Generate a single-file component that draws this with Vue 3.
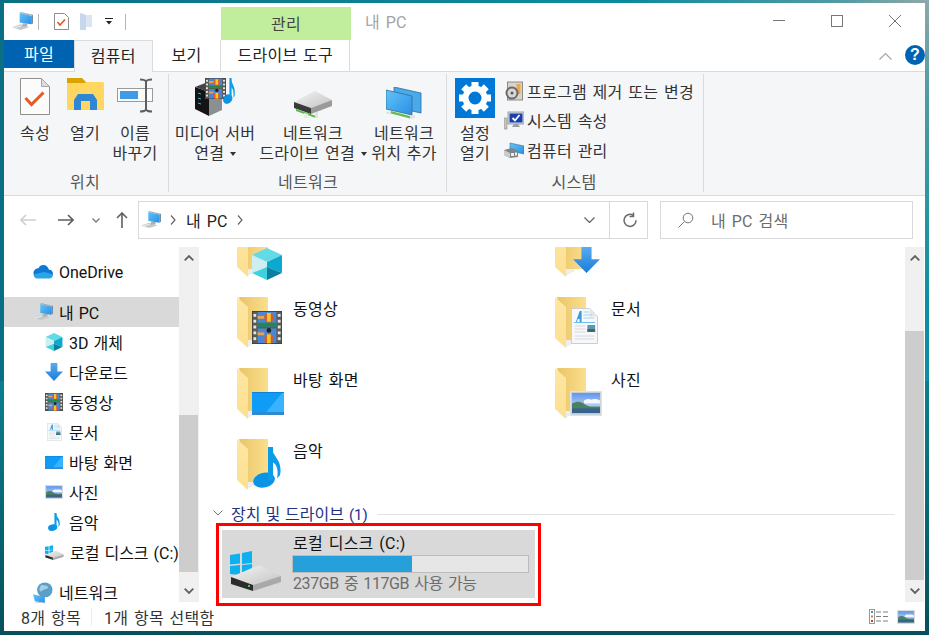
<template>
  <div class="desk">
    <svg class="defs" width="0" height="0" aria-hidden="true">
      <defs>
        <linearGradient id="gBack" x1="0" y1="0" x2="1" y2="0"><stop offset="0" stop-color="#e9c468" /><stop offset="1" stop-color="#fbdf8d" /></linearGradient>
        <linearGradient id="gDoor" x1="0" y1="0" x2="0" y2="1"><stop offset="0" stop-color="#fee6a3" /><stop offset="1" stop-color="#fcdf90" /></linearGradient>
        <linearGradient id="gArrow" x1="0" y1="0" x2="0" y2="1"><stop offset="0" stop-color="#58acf0" /><stop offset="1" stop-color="#1c7cd6" /></linearGradient>
        <linearGradient id="gScreen" x1="0" y1="0" x2="1" y2="1"><stop offset="0" stop-color="#62c4f8" /><stop offset="1" stop-color="#2a8fe6" /></linearGradient>
        <linearGradient id="gSky" x1="0" y1="0" x2="0" y2="1"><stop offset="0" stop-color="#5f96ea" /><stop offset="1" stop-color="#dfeaf6" /></linearGradient>
        <linearGradient id="gTop" x1="0" y1="0" x2="1" y2="1"><stop offset="0" stop-color="#f4f4f4" /><stop offset="1" stop-color="#c4c4c4" /></linearGradient>

        <symbol id="i-pc" viewBox="0 0 22 20" preserveAspectRatio="none">
          <path d="M0 16l9-3 9 3-9 3z" fill="#c3c8cb" />
          <path d="M1 16.500l8-2.500 1 1-8 2.500z" fill="#e8eaeb" />
          <path d="M11 12h5v3h-5z" fill="#aab0b5" />
          <path d="M8 1l12 3v9l-12-2z" fill="url(#gScreen)" />
          <path d="M8 1l1-1 13 3-2 1z" fill="#9ab2c2" />
          <path d="M20 4l2-1v9l-2 1z" fill="#6f8ea3" />
        </symbol>

        <symbol id="i-folder" viewBox="0 0 48 51" preserveAspectRatio="none">
          <path d="M2 0h29v43h-20z" fill="url(#gBack)" />
          <path d="M0 0l11 10v41l-11-10z" fill="url(#gDoor)" />
          <path d="M11 43h9v2l-9 5z" fill="#eeeeee" />
        </symbol>

        <symbol id="i-cube" viewBox="0 0 32 32" preserveAspectRatio="none">
          <path d="M16 0l15 7-15 7-15-7z" fill="#63dbe6" />
          <path d="M1 7l15 7v5l-15 6z" fill="#cdeff3" />
          <path d="M31 7l-15 7v5l15 6z" fill="#0aa9cd" />
          <path d="M1 25l15-6v13z" fill="#3fd1de" />
          <path d="M31 25l-15-6v13z" fill="#0a7f9f" />
        </symbol>

        <symbol id="i-arrow" viewBox="0 0 32 32" preserveAspectRatio="none">
          <path d="M10 0h12v15h10l-16 17-16-17h10z" fill="url(#gArrow)" />
        </symbol>

        <symbol id="i-film" viewBox="0 0 32 34" preserveAspectRatio="none">
          <rect width="32" height="34" fill="#5b5b55" />
          <rect y="0" width="32" height="34" fill="none" stroke="#2f2f2f" />
          <g fill="#e6e6e0">
            <rect x="1.500" y="3" width="3" height="3" /><rect x="1.500" y="9" width="3" height="3" /><rect x="1.500" y="15" width="3" height="3" /><rect x="1.500" y="21" width="3" height="3" /><rect x="1.500" y="27" width="3" height="3" />
            <rect x="27.500" y="3" width="3" height="3" /><rect x="27.500" y="9" width="3" height="3" /><rect x="27.500" y="15" width="3" height="3" /><rect x="27.500" y="21" width="3" height="3" /><rect x="27.500" y="27" width="3" height="3" />
          </g>
          <rect x="6" y="1" width="20" height="15" fill="#4a86d8" />
          <rect x="6" y="18" width="20" height="15" fill="#4a86d8" />
          <rect x="6" y="12" width="20" height="4" fill="#1f8a4c" />
          <circle cx="18" cy="7" r="5" fill="#e05a20" />
          <rect x="16" y="2" width="4" height="9" fill="#f1c62f" />
          <circle cx="18" cy="29" r="5" fill="#e05a20" />
          <rect x="16" y="24" width="4" height="9" fill="#f1c62f" />
          <rect x="6" y="5" width="7" height="3" fill="#e9a24a" />
          <rect x="6" y="22" width="7" height="3" fill="#e9a24a" />
          <circle cx="18" cy="20" r="2.500" fill="#222" />
        </symbol>

        <symbol id="i-doc" viewBox="0 0 28 36" preserveAspectRatio="none">
          <path d="M.5.5h19l8 8v27h-27z" fill="#f7f8f9" stroke="#c9cdd0" />
          <path d="M19.500.5v8h8z" fill="#e4e6e8" />
          <path d="M5 14l4-11h2v11h-2v-3h-2l-1 3z" fill="#3c9ad8" />
          <path d="M13 4h6M13 7h9M13 10h11" stroke="#a6d4f2" />
          <path d="M3 14.500h22" stroke="#67bdf0" />
          <path d="M4 18h11M4 21h11M4 24h11M4 28h20M4 31h20" stroke="#d4d8db" />
          <rect x="17" y="17" width="8" height="7" fill="#5e94b4" />
          <rect x="17" y="21" width="8" height="3" fill="#3e6d5e" />
        </symbol>

        <symbol id="i-photo" viewBox="0 0 32 26" preserveAspectRatio="none">
          <rect width="32" height="26" fill="#dfe3e6" />
          <rect x="1" y="1" width="30" height="24" fill="#cdd3d8" />
          <rect x="2" y="2" width="28" height="21" fill="url(#gSky)" />
          <path d="M14 10c3-2 5-2 7-1 3-1 6-1 9 1v3h-16z" fill="#f4f7fb" />
          <path d="M2 13c6-3 9-2 13 1s9 2 15 2v7h-28z" fill="#4d7f63" />
          <rect x="2" y="18" width="28" height="5" fill="#37648c" />
        </symbol>

        <symbol id="i-desktop" viewBox="0 0 32 23" preserveAspectRatio="none">
          <rect width="32" height="23" fill="#0f9cf6" />
          <path d="M12 23l18-22h2v22z" fill="#38b3ff" />
          <rect width="32" height="1" fill="#0a83d4" />
          <rect y="20" width="32" height="3" fill="#2f8ad0" />
        </symbol>

        <symbol id="i-note" viewBox="0 0 28 42" preserveAspectRatio="none">
          <ellipse cx="11" cy="34" rx="11" ry="7.500" transform="rotate(-14 11 34)" fill="#0b94e6" />
          <rect x="15" y="0" width="5" height="34" fill="#0b9cea" />
          <path d="M19 1c1 10 11 12 8 28l-3 3c2-10-1-15-5-17z" fill="#0b9cea" />
        </symbol>

        <symbol id="i-drive" viewBox="0 0 52 41" preserveAspectRatio="none">
          <path d="M0 5l10-1.500v10l-10 1zM12 3l10-2v12l-10 1zM0 16l10-1v10l-10-1zM12 15l10-1v11l-10-1z" fill="#0fb0f0" />
          <path d="M1 27l28-12 22 11-28 9z" fill="url(#gTop)" />
          <path d="M1 27l22 8v6l-22-7z" fill="#2c2c2c" />
          <path d="M23 35l28-9v6l-28 9z" fill="#a9a9a9" />
          <rect x="18" y="35" width="2" height="2" fill="#30d050" />
        </symbol>

        <symbol id="i-net" viewBox="0 0 22 24" preserveAspectRatio="none">
          <circle cx="13" cy="9" r="8.500" fill="#5b9fc8" />
          <path d="M9 3c3 1 6 0 8 3-2 3-5 2-7 4s-3 0-3-2z" fill="#a3cfe5" />
          <path d="M0 14l13 3v7l-11-2z" fill="url(#gScreen)" />
          <path d="M3 22l10 2-2 1-9-2z" fill="#c5cace" />
        </symbol>

        <symbol id="i-onedrive" viewBox="0 0 20 13" preserveAspectRatio="none">
          <path d="M4 12h12c3 0 4-2 4-4s-2-4-4-3.500c-1-3-3-4.500-5.500-4.500s-4 1-5 3c-3 0-5 2-5 4.500s1 4.500 3.500 4.500z" fill="#0f78d4" />
          <path d="M4 12.500h12.500c2 0 3.500-2 3.500-4l-9-2-10 2c0 2 1 4 3 4z" fill="#2aa6e8" />
        </symbol>
      </defs>
    </svg>

    <div class="window">
      <div class="titlebar">
        <div class="qat">
          <svg class="q-pc"><use href="#i-pc" /></svg>
          <span class="q-sep"></span>
          <svg class="q-doc" viewBox="0 0 15 17">
            <path d="M.5.500h10l4 4v12h-14z" fill="#fff" stroke="#8d8d8d" />
            <path d="M3.500 9l2.500 3 5-5.500" fill="none" stroke="#e8541e" stroke-width="1.600" />
          </svg>
          <svg class="q-folder" viewBox="0 0 12 17"><path d="M0 0l6 2h6v12h-6l-6 3z" fill="#dbe6f3" /><path d="M0 0l6 2v15h-6z" fill="#c8d8ec" /></svg>
          <svg class="q-drop" viewBox="0 0 8 7"><rect width="8" height="1" fill="#222" /><path d="M1 3h6l-3 3.500z" fill="#222" /></svg>
          <span class="q-sep q-sep2"></span>
        </div>
        <div class="ctx-title">관리</div>
        <div class="win-title">내 PC</div>
        <div class="win-ctl">
          <svg viewBox="0 0 12 12"><path d="M0 5.500h12" stroke="#777" /></svg>
          <svg viewBox="0 0 12 12"><rect x=".5" y=".5" width="11" height="11" fill="none" stroke="#777" /></svg>
          <svg viewBox="0 0 12 12"><path d="M0 0l12 12M12 0l-12 12" stroke="#777" /></svg>
        </div>
      </div>

      <div class="tabs">
        <div class="tab tab-file">파일</div>
        <div class="tab tab-cur">컴퓨터</div>
        <div class="tab tab-view">보기</div>
        <div class="tab tab-tool">드라이브 도구</div>
        <svg class="collapse" viewBox="0 0 13 8"><path d="M.5 7.500l6-6 6 6" fill="none" stroke="#a6a6a6" stroke-width="1.200" /></svg>
        <div class="help">?</div>
      </div>

      <div class="ribbon">
        <section class="group g1">
          <div class="items">
            <div class="big w50">
              <div class="big-icon">
                <svg width="30" height="37" viewBox="0 0 30 37">
                  <path d="M.5.500h21l8 8v28h-29z" fill="#fbfbfb" stroke="#8f8f8f" />
                  <path d="M21.500.500v8h8z" fill="#dcdcdc" stroke="#a8a8a8" />
                  <path d="M5.500 20l6 6.500 12-12" fill="none" stroke="#ea5a20" stroke-width="3" />
                </svg>
              </div>
              <div class="lbl">속성</div>
            </div>
            <div class="big w50">
              <div class="big-icon">
                <svg width="37" height="32" viewBox="0 0 37 32">
                  <path d="M0 0h15l5 5h-20z" fill="#dba300" />
                  <path d="M0 5h17l3-1h15.500c1 0 1.500 1 1.500 1.500v26.500h-37z" fill="#ffd660" />
                  <path d="M7 32v-10l4-6h15l4 6v10h-7v-9h-9v9z" fill="#2f86d4" />
                </svg>
              </div>
              <div class="lbl">열기</div>
            </div>
            <div class="big w50">
              <div class="big-icon">
                <svg width="37" height="35" viewBox="0 0 37 35">
                  <rect x=".5" y="10.500" width="35" height="13" fill="#fbfbfb" stroke="#9a9a9a" />
                  <rect x="3" y="13" width="18" height="8" fill="#3f9be6" />
                  <path d="M23 1.500c3 0 5 0 6 2 1-2 3-2 6-2M23 33.500c3 0 5 0 6-2 1 2 3 2 6 2M29 3v29" fill="none" stroke="#5f5f5f" stroke-width="2" />
                </svg>
              </div>
              <div class="lbl">이름<br />바꾸기</div>
            </div>
          </div>
          <div class="g-name">위치</div>
        </section>

        <section class="group g2">
          <div class="items">
            <div class="big w84">
              <div class="big-icon">
                <svg width="40" height="38" viewBox="0 0 40 38">
                  <path d="M0 9l14 5v24l-14-7z" fill="#141414" />
                  <path d="M14 14l13-5v23l-13 6z" fill="#8c8f92" />
                  <path d="M0 9l13-5 14 5-13 5z" fill="#444" />
                  <path d="M3 15l3 1M3 20l3 1M3 25l3 1" stroke="#2fb4e8" />
                  <svg x="10" y="0" width="21" height="21"><use href="#i-film" /></svg>
                  <svg x="28" y="0" width="12" height="26"><use href="#i-note" /></svg>
                </svg>
              </div>
              <div class="lbl">미디어 서버<br />연결 <i class="caret"></i></div>
            </div>
            <div class="big w112">
              <div class="big-icon">
                <svg width="40" height="30" viewBox="0 0 40 30" class="mt12">
                  <path d="M1 12l21-11 17 9-21 8z" fill="url(#gTop)" />
                  <path d="M1 12l17 6v6l-17-6z" fill="#3a3a3a" />
                  <path d="M18 18l21-8v6l-21 8z" fill="#9a9a9a" />
                  <path d="M3 19l20 7 0 2-20-7z" fill="#58b848" />
                  <path d="M11 23v5h4v-4z" fill="#e8ece8" />
                  <path d="M22 22v6h3v-6z" fill="#dfe4df" />
                </svg>
              </div>
              <div class="lbl">네트워크<br />드라이브 연결 <i class="caret"></i></div>
            </div>
            <div class="big w70">
              <div class="big-icon">
                <svg width="36" height="32" viewBox="0 0 36 32" class="mt10">
                  <path d="M8 0l27 6v20l-27-6z" fill="#49a9ea" stroke="#2e6e98" stroke-width=".8" />
                  <path d="M0 3l26 6v19l-26-6z" fill="url(#gScreen)" stroke="#2e6e98" stroke-width=".8" />
                  <path d="M5 24l19 5v2.500l-19-5z" fill="#62c04e" />
                  <path d="M0 25l5-.5v3l-5-1zM24 29l5-1v3l-5 1z" fill="#e0e4e0" />
                </svg>
              </div>
              <div class="lbl">네트워크<br />위치 추가</div>
            </div>
          </div>
          <div class="g-name">네트워크</div>
        </section>

        <section class="group g3">
          <div class="items">
            <div class="big w48">
              <div class="big-icon">
                <svg width="40" height="40" viewBox="0 0 40 40">
                  <rect width="40" height="40" fill="#0078d7" />
                  <g fill="#fff">
                    <rect v-for="a in gearTeeth" :key="a" x="16.500" y="4" width="7" height="7" :transform="`rotate(${a} 20 20)`" />
                  </g>
                  <circle cx="20" cy="20" r="9.500" fill="none" stroke="#fff" stroke-width="6" />
                </svg>
              </div>
              <div class="lbl">설정<br />열기</div>
            </div>
            <div class="small-list">
              <div class="small-row">
                <svg width="19" height="20" viewBox="0 0 19 20">
                  <rect x="3" y="1" width="15" height="18" fill="#d9d3c8" stroke="#8b8b8b" />
                  <rect x="12" y="3" width="4" height="10" fill="#f0a64a" />
                  <circle cx="7.500" cy="12" r="6.500" fill="#6a6a6a" />
                  <circle cx="7.500" cy="12" r="4.500" fill="#d8d8d8" />
                  <circle cx="7.500" cy="12" r="1.500" fill="#555" />
                </svg>
                <span>프로그램 제거 또는 변경</span>
              </div>
              <div class="small-row">
                <svg width="20" height="19" viewBox="0 0 20 19">
                  <rect x="0" y="7" width="3" height="11" fill="#c6c6bc" stroke="#8b8b8b" stroke-width=".6" />
                  <rect x="4" y="1" width="16" height="12" fill="#d8dde2" stroke="#8a9098" stroke-width=".8" />
                  <rect x="5.500" y="2.500" width="13" height="9" fill="#1b3fae" />
                  <path d="M8.500 7l2.500 2.500 4.500-5.500" fill="none" stroke="#fff" stroke-width="1.800" />
                  <path d="M8 16l2-3h4l2 3z" fill="#9aa0a6" />
                </svg>
                <span>시스템 속성</span>
              </div>
              <div class="small-row">
                <svg width="20" height="16" viewBox="0 0 20 16">
                  <path d="M6 1l14 3v8l-14-3z" fill="url(#gScreen)" stroke="#3c6e90" stroke-width=".6" />
                  <path d="M0 8l8-2 6 3v6l-8 1-6-3z" fill="#7f8589" />
                  <path d="M0 8l6 3v5l-6-3z" fill="#c9cccf" />
                  <rect x="7" y="11" width="3" height="3" fill="#eee" />
                  <rect x="11" y="10.500" width="2" height="3" fill="#eee" />
                </svg>
                <span>컴퓨터 관리</span>
              </div>
            </div>
          </div>
          <div class="g-name g-name3">시스템</div>
        </section>
      </div>

      <div class="addr">
        <div class="nav">
          <svg class="n-back" viewBox="0 0 16 12"><path d="M16 6h-15M6 1l-5 5 5 5" fill="none" stroke="#cfcfcf" stroke-width="1.600" /></svg>
          <svg class="n-fwd" viewBox="0 0 16 12"><path d="M0 6h15M10 1l5 5-5 5" fill="none" stroke="#5f5f5f" stroke-width="1.600" /></svg>
          <svg class="n-drop" viewBox="0 0 8 5"><path d="M.5.500l3.500 3.500 3.500-3.500" fill="none" stroke="#7a7a7a" stroke-width="1.400" /></svg>
          <svg class="n-up" viewBox="0 0 12 16"><path d="M6 16v-15M1 6l5-5 5 5" fill="none" stroke="#5f5f5f" stroke-width="1.600" /></svg>
        </div>
        <div class="addr-box">
          <svg class="a-pc"><use href="#i-pc" /></svg>
          <svg class="a-sep" viewBox="0 0 6 10"><path d="M1 .5l4 4.500-4 4.500" fill="none" stroke="#666" stroke-width="1.200" /></svg>
          <span class="a-text">내 PC</span>
          <svg class="a-sep a-sep2" viewBox="0 0 6 10"><path d="M1 .5l4 4.500-4 4.500" fill="none" stroke="#666" stroke-width="1.200" /></svg>
          <svg class="a-drop" viewBox="0 0 11 6"><path d="M.5.500l5 5 5-5" fill="none" stroke="#666" stroke-width="1.300" /></svg>
          <span class="a-line"></span>
          <svg class="a-ref" viewBox="0 0 14 14"><path d="M10 2.200a6 6 0 1 0 3 5M10.500 -.5v4h-4" fill="none" stroke="#6a6a6a" stroke-width="1.500" /></svg>
        </div>
        <div class="search">
          <svg viewBox="0 0 16 16"><circle cx="10" cy="6" r="4.800" fill="none" stroke="#777" /><path d="M6.500 9.500l-6 6" stroke="#777" /></svg>
          <span>내 PC 검색</span>
        </div>
      </div>

      <div class="main">
        <nav class="tree">
          <div
            v-for="row in treeRows"
            :key="row.name"
            :class="['t-row', row.kind, { sel: row.sel }]"
          >
            <svg :class="['t-icon', 'ti-' + row.icon]"><use :href="'#i-' + row.icon" /></svg>
            <span>{{ row.name }}</span>
          </div>
        </nav>
        <div class="sbar sbar-left">
          <div class="s-btn"><svg viewBox="0 0 10 6"><path d="M.7 5.300l4.300-4.300 4.300 4.300" fill="none" stroke="#606060" stroke-width="1.800" /></svg></div>
          <div class="s-space left-top"></div>
          <div class="s-thumb"></div>
          <div class="s-space left-bottom"></div>
          <div class="s-btn"><svg viewBox="0 0 10 6"><path d="M.7.700l4.300 4.300 4.300-4.300" fill="none" stroke="#606060" stroke-width="1.800" /></svg></div>
        </div>

        <div class="pane">
          <div class="folders">
            <div class="f-grid">
              <div v-for="f in folders" :key="f.icon" class="tile">
                <div class="f-icon">
                  <svg class="f-base"><use href="#i-folder" /></svg>
                  <svg :class="['f-over', 'ov-' + f.icon]"><use :href="'#i-' + f.icon" /></svg>
                </div>
                <span class="f-name">{{ f.name }}</span>
              </div>
            </div>
          </div>
          <div class="sec-head">
            <svg viewBox="0 0 10 6"><path d="M.5.500l4.500 4.500 4.500-4.500" fill="none" stroke="#707070" /></svg>
            <span>장치 및 드라이브 <span class="cnt">(1)</span></span>
            <i class="sec-line"></i>
          </div>
          <div class="drive">
            <svg class="d-icon"><use href="#i-drive" /></svg>
            <div class="d-info">
              <div class="d-name">로컬 디스크 (C:)</div>
              <div class="d-bar"><div class="d-fill" :style="{ width: usedPct + '%' }"></div></div>
              <div class="d-free">237GB 중 117GB 사용 가능</div>
            </div>
            <div class="mark"></div>
          </div>
        </div>

        <div class="sbar sbar-right">
          <div class="s-btn"><svg viewBox="0 0 10 6"><path d="M.7 5.300l4.300-4.300 4.300 4.300" fill="none" stroke="#606060" stroke-width="1.800" /></svg></div>
          <div class="s-space right-top"></div>
          <div class="s-thumb"></div>
          <div class="s-btn"><svg viewBox="0 0 10 6"><path d="M.7.700l4.300 4.300 4.300-4.300" fill="none" stroke="#606060" stroke-width="1.800" /></svg></div>
        </div>
      </div>

      <div class="status">
        <span class="st-a">8개 항목</span>
        <i class="st-sep"></i>
        <span>1개 항목 선택함</span>
        <svg class="st-list" viewBox="0 0 19 15">
          <rect x=".5" y=".5" width="5" height="14" fill="#fff" stroke="#9a9a9a" />
          <rect x="2" y="2" width="2" height="2" fill="#3c8fd0" /><rect x="2" y="6.500" width="2" height="2" fill="#a89a30" /><rect x="2" y="11" width="2" height="2" fill="#c84030" />
          <path d="M7 3h5M14 3h5M7 7.500h5M14 7.500h5M7 12h5M14 12h5" stroke="#808080" />
        </svg>
        <svg class="st-tile"><use href="#i-photo" /></svg>
      </div>
    </div>
  </div>
</template>

<script setup>
const gearTeeth = [0, 45, 90, 135, 180, 225, 270, 315]
const usedPct = 50.6

const treeRows = [
  { name: 'OneDrive', icon: 'onedrive', kind: 'top gap' },
  { name: '내 PC', icon: 'pc', kind: 'top', sel: true },
  { name: '3D 개체', icon: 'cube', kind: 'sub' },
  { name: '다운로드', icon: 'arrow', kind: 'sub' },
  { name: '동영상', icon: 'film', kind: 'sub' },
  { name: '문서', icon: 'doc', kind: 'sub' },
  { name: '바탕 화면', icon: 'desktop', kind: 'sub' },
  { name: '사진', icon: 'photo', kind: 'sub' },
  { name: '음악', icon: 'note', kind: 'sub' },
  { name: '로컬 디스크 (C:)', icon: 'drive', kind: 'sub' },
  { name: '네트워크', icon: 'net', kind: 'top last' },
]

const folders = [
  { name: '', icon: 'cube' },
  { name: '', icon: 'arrow' },
  { name: '동영상', icon: 'film' },
  { name: '문서', icon: 'doc' },
  { name: '바탕 화면', icon: 'desktop' },
  { name: '사진', icon: 'photo' },
  { name: '음악', icon: 'note' },
]
</script>

<style>
html,
body {
  margin: 0;
  background: #0a6f7f;
}
</style>

<style scoped>
.desk {
  width: 929px;
  height: 635px;
  box-sizing: border-box;
  padding: 3px 4px 4px;
  overflow: hidden;
  position: relative;
  background:
    radial-gradient(circle at 929px 0, #8fa8a8 0, rgba(110, 160, 165, 0.7) 90px, rgba(13, 139, 155, 0) 300px),
    linear-gradient(90deg, #0a6f82 0, #0d8a9b 60%, #0d8fa0 100%) top / 100% 60% no-repeat,
    linear-gradient(180deg, #0d8797 0%, #0c7f8f 60%, #06505c 100%);
  font-family: Roboto, "Noto Sans CJK KR", sans-serif;
  font-size: 16px;
  letter-spacing: 0.25px;
  word-spacing: 1.5px;
  color: #222;
}

.defs {
  position: absolute;
}

.window {
  width: 921px;
  height: 628px;
  background: #fff;
  display: flex;
  flex-direction: column;
}

/* title row */
.titlebar {
  height: 37px;
  display: flex;
  flex: none;
}

.qat {
  width: 217px;
  display: flex;
  align-items: center;
  position: relative;
}

.q-pc {
  width: 21px;
  height: 19px;
  margin-left: 8px;
}

.q-sep {
  width: 1px;
  height: 16px;
  background: #b5b5b5;
  margin-left: 5px;
}

.q-sep2 {
  margin-left: 12px;
}

.q-doc {
  width: 15px;
  height: 17px;
  margin-left: 15px;
}

.q-folder {
  width: 12px;
  height: 17px;
  margin-left: 11px;
}

.q-drop {
  width: 8px;
  height: 7px;
  margin-left: 13px;
}

.ctx-title {
  width: 130px;
  margin-top: 4px;
  background: #c0ee9d;
  text-align: center;
  line-height: 35px;
  height: 33px;
  color: #444;
}

.win-title {
  margin-left: 14px;
  line-height: 39px;
  color: #a3a3a3;
}

.win-ctl {
  margin-left: auto;
  display: flex;
  gap: 46px;
  padding: 12px 24px 0 0;
}

.win-ctl svg {
  width: 12px;
  height: 12px;
}

/* tabs */
.tabs {
  height: 31px;
  flex: none;
  border-bottom: 1px solid #dadbdc;
  display: flex;
  align-items: flex-start;
  box-sizing: content-box;
  position: relative;
}

.tab {
  height: 31px;
  text-align: center;
  line-height: 31px;
  box-sizing: border-box;
}

.tab-file {
  width: 70px;
  height: 28px;
  background: #0063b1;
  color: #fff;
  line-height: 29px;
}

.tab-cur {
  width: 79px;
  height: 32px;
  background: #f5f6f7;
  border: 1px solid #dadbdc;
  border-bottom: 0;
}

.tab-view {
  width: 68px;
}

.tab-tool {
  width: 130px;
  border-left: 1px solid #dadbdc;
  border-right: 1px solid #dadbdc;
}

.collapse {
  width: 13px;
  height: 8px;
  margin: 12px 0 0 529px;
}

.help {
  width: 20px;
  height: 20px;
  border-radius: 50%;
  margin: 5px 0 0 13px;
  background: #0063b1;
  color: #fff;
  font-family: "Liberation Sans", sans-serif;
  font-weight: 700;
  font-size: 16px;
  line-height: 20px;
  text-align: center;
}

/* ribbon */
.ribbon {
  height: 123px;
  flex: none;
  background: #f5f6f7;
  border-bottom: 1px solid #dadbdc;
  display: flex;
}

.group {
  height: 123px;
  display: flex;
  flex-direction: column;
  position: relative;
  box-sizing: border-box;
}

.group::after {
  content: "";
  position: absolute;
  right: 0;
  top: 2px;
  bottom: 3px;
  width: 1px;
  background: #dadbdc;
}

.g1 {
  width: 165px;
  padding-left: 6px;
}

.g2 {
  width: 278px;
  padding-left: 4px;
}

.g3 {
  width: 257px;
  padding-left: 4px;
}

.items {
  display: flex;
  height: 95px;
}

.big {
  display: flex;
  flex-direction: column;
  align-items: center;
  padding-top: 4px;
}

.w50 {
  width: 50px;
}

.w84 {
  width: 84px;
}

.w112 {
  width: 112px;
}

.w70 {
  width: 70px;
}

.w48 {
  width: 48px;
}

.big-icon {
  height: 48px;
  flex: none;
}

.big-icon svg {
  display: block;
  margin-top: 2px;
}

.big-icon svg.mt12 {
  margin-top: 14px;
}

.big-icon svg.mt10 {
  margin-top: 11px;
}

.lbl {
  line-height: 20px;
  text-align: center;
  white-space: nowrap;
  color: #333;
}

.caret {
  display: inline-block;
  width: 0;
  height: 0;
  border: 3.500px solid transparent;
  border-top: 4px solid #333;
  border-bottom: 0;
  vertical-align: 3px;
}

.g-name {
  height: 28px;
  line-height: 32px;
  text-align: center;
  color: #555;
  margin-left: -6px;
  padding-right: 3px;
}

.g2 .g-name {
  margin-left: -4px;
  padding-right: 0;
}

.g3 .g-name3 {
  margin-left: 0;
  padding-right: 7px;
}

.small-list {
  margin-left: 5px;
  padding-top: 4px;
}

.small-row {
  height: 29.500px;
  display: flex;
  align-items: center;
  white-space: nowrap;
  color: #333;
}

.small-row svg {
  width: 20px;
  margin-right: 3px;
}

/* address row */
.addr {
  height: 51px;
  flex: none;
  display: flex;
  padding-top: 5px;
  box-sizing: border-box;
}

.nav {
  width: 134px;
  height: 38px;
  position: relative;
  display: flex;
  align-items: center;
}

.n-back {
  width: 16px;
  height: 12px;
  margin-left: 16px;
}

.n-fwd {
  width: 16px;
  height: 12px;
  margin-left: 22px;
}

.n-drop {
  width: 8px;
  height: 5px;
  margin-left: 18px;
}

.n-up {
  width: 12px;
  height: 16px;
  margin-left: 16px;
}

.addr-box {
  width: 510px;
  height: 38px;
  box-sizing: border-box;
  border: 1px solid #d9d9d9;
  display: flex;
  align-items: center;
}

.a-pc {
  width: 20px;
  height: 18px;
  margin-left: 2px;
}

.a-sep {
  width: 6px;
  height: 10px;
  margin-left: 9px;
}

.a-text {
  margin-left: 10px;
  width: 50px;
  white-space: nowrap;
}

.a-sep2 {
  margin-left: 1px;
}

.a-drop {
  width: 11px;
  height: 6px;
  margin-left: 341px;
}

.a-line {
  width: 1px;
  height: 36px;
  background: #d9d9d9;
  margin-left: 14px;
}

.a-ref {
  width: 14px;
  height: 14px;
  margin-left: 13px;
  overflow: visible;
}

.search {
  width: 253px;
  height: 38px;
  margin-left: 12px;
  box-sizing: border-box;
  border: 1px solid #d9d9d9;
  display: flex;
  align-items: center;
  color: #6d6d6d;
}

.search svg {
  width: 16px;
  height: 16px;
  margin-left: 17px;
}

.search span {
  margin-left: 17px;
}

/* main area */
.main {
  height: 356px;
  flex: none;
  display: flex;
}

.tree {
  width: 175px;
  height: 356px;
  overflow: hidden;
  flex: none;
  padding-top: 10px;
  box-sizing: border-box;
  color: #111;
  letter-spacing: 0;
  word-spacing: 1px;
}

.t-row {
  height: 30px;
  display: flex;
  align-items: center;
  white-space: nowrap;
}

.t-row.top {
  padding-left: 29px;
}

.t-row.gap {
  margin-bottom: 10px;
}

.t-row.last {
  margin-top: 10px;
}

.t-row.sub {
  padding-left: 41px;
}

.t-row.sel {
  background: #d9d9d9;
}

.t-icon {
  width: 18px;
  height: 18px;
  margin-right: 6px;
  flex: none;
}

.top .t-icon {
  width: 20px;
  height: 18px;
}

.top .ti-onedrive {
  height: 14px;
}

.top .ti-net {
  height: 21px;
}

.t-row .ti-doc {
  width: 15px;
  margin-left: 2px;
  margin-right: 7px;
}

.t-row .ti-desktop {
  height: 13px;
}

.t-row .ti-photo {
  height: 14px;
}

.t-row .ti-note {
  width: 12px;
  margin-left: 3px;
  margin-right: 9px;
}

.t-row .ti-drive {
  width: 19px;
  height: 15px;
}

.sbar {
  flex: none;
  height: 355px;
  background: #f0f0f0;
  display: flex;
  flex-direction: column;
}

.sbar-left {
  width: 20px;
  margin-right: 5px;
}

.sbar-left .s-thumb {
  margin-right: 1px;
}

.sbar-right {
  width: 19px;
}

.s-btn {
  height: 22px;
  flex: none;
  display: flex;
  align-items: center;
  justify-content: center;
}

.s-btn svg {
  width: 10px;
  height: 6px;
}

.s-space {
  flex: none;
}

.left-top {
  height: 146px;
}

.left-bottom {
  height: 8px;
}

.right-top {
  height: 62px;
}

.s-thumb {
  flex: 1;
  background: #cdcdcd;
}

.pane {
  width: 701px;
  flex: none;
  display: flex;
  flex-direction: column;
}

.folders {
  height: 254px;
  overflow: hidden;
  flex: none;
}

.f-grid {
  margin: -21px 0 0 33px;
  display: grid;
  grid-template-columns: 318px 318px;
  grid-auto-rows: 71px;
}

.tile {
  display: flex;
  align-items: flex-start;
}

.f-icon {
  width: 48px;
  height: 51px;
  position: relative;
  flex: none;
}

.f-base {
  width: 48px;
  height: 51px;
  display: block;
}

.f-over {
  position: absolute;
}

.ov-cube {
  left: 14px;
  top: 22px;
  width: 32px;
  height: 32px;
}

.ov-arrow {
  left: 18px;
  top: 21px;
  width: 27px;
  height: 26px;
}

.ov-film {
  left: 15px;
  top: 14px;
  width: 30px;
  height: 33px;
}

.ov-doc {
  left: 16px;
  top: 11px;
  width: 27px;
  height: 36px;
}

.ov-desktop {
  left: 15px;
  top: 24px;
  width: 32px;
  height: 23px;
}

.ov-photo {
  left: 15px;
  top: 23px;
  width: 32px;
  height: 25px;
}

.ov-note {
  left: 16px;
  top: 8px;
  width: 28px;
  height: 41px;
}

.f-name {
  margin-left: 8px;
  line-height: 26px;
  color: #111;
}

.sec-head {
  height: 24px;
  display: flex;
  align-items: center;
  padding-left: 9px;
  color: #1e3287;
  flex: none;
  letter-spacing: 0;
  word-spacing: 1px;
}

.sec-head svg {
  width: 10px;
  height: 6px;
  margin-right: 8px;
}

.cnt {
  font-size: 15px;
}

.sec-line {
  height: 1px;
  background: #e2e2e2;
  flex: 1;
  margin: 2px 10px 0 9px;
}

.drive {
  width: 313px;
  height: 68px;
  margin: 5px 0 0 18px;
  box-sizing: border-box;
  padding-left: 8px;
  background: #d9d9d9;
  display: flex;
  position: relative;
  z-index: 1;
  flex: none;
}

.d-icon {
  width: 52px;
  height: 41px;
  margin-top: 20px;
  flex: none;
}

.d-info {
  margin-left: 10px;
  width: 237px;
  padding-top: 3px;
}

.d-name {
  line-height: 22px;
  color: #111;
  white-space: nowrap;
  padding-left: 1px;
}

.d-bar {
  height: 18px;
  box-sizing: border-box;
  border: 1px solid #bcbcbc;
  background: #e6e6e6;
}

.d-fill {
  height: 100%;
  background: #26a0da;
}

.d-free {
  line-height: 22px;
  color: #6d6d6d;
  white-space: nowrap;
  padding-left: 1px;
  letter-spacing: -0.4px;
}

.mark {
  position: absolute;
  left: -6px;
  right: -6px;
  top: -7px;
  bottom: -8px;
  border: 3px solid #f00;
  pointer-events: none;
}

/* status bar */
.status {
  height: 28px;
  flex: none;
  box-sizing: border-box;
  padding-bottom: 1px;
  display: flex;
  align-items: center;
  padding-left: 17px;
  position: relative;
  color: #333;
}

.st-a {
  width: 70px;
}

.st-sep {
  width: 1px;
  height: 18px;
  background: #ececec;
  margin-right: 12px;
}

.st-list {
  width: 19px;
  height: 15px;
  margin-left: auto;
}

.st-tile {
  width: 18px;
  height: 14px;
  margin: 0 10px 0 9px;
}
</style>
